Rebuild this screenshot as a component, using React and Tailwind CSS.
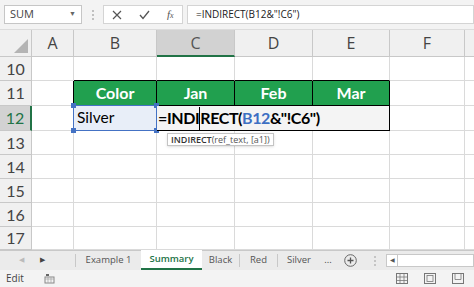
import React from "react";

const RowHead = ({ n, active }) => (
  <div
    className={
      active
        ? "w-[32px] shrink-0 flex items-center justify-center bg-[#d2d2d2] border-r-2 border-r-[#217346] border-b border-b-[#c8c8c8] text-[#217346] text-[16px]"
        : "w-[32px] shrink-0 flex items-center justify-center bg-[#f0f0f0] border-r border-b border-[#c8c8c8] text-[#444] text-[16px]"
    }
  >
    {n}
  </div>
);

const Blank = ({ w, extra = "" }) => (
  <div className={`shrink-0 border-r border-b border-[#dadada] ${w} ${extra}`} />
);

const GreenCell = ({ w, children }) => (
  <div
    className={`shrink-0 flex items-center justify-center bg-[#21a04f] text-white font-bold text-[16px] border-r border-b border-black ${w}`}
  >
    {children}
  </div>
);

const Handle = ({ pos }) => (
  <span className={`absolute w-[5px] h-[5px] bg-[#4472c4] ${pos}`} />
);

export default function App() {
  return (
    <div className="w-[474px] h-[287px] overflow-hidden bg-white font-['Lato','Liberation_Sans',sans-serif] flex flex-col">
      {/* formula bar */}
      <div className="h-[30px] shrink-0 bg-[#f3f3f3] flex items-center pl-[4px] border-b border-[#dcdcdc]">
        <div className="w-[78px] h-[19px] bg-white border border-[#c6c6c6] flex items-center justify-between px-[5px] font-['Open_Sans',sans-serif] text-[11px] text-[#444]">
          <span>SUM</span>
          <span className="text-[7px] text-[#666]">▼</span>
        </div>
        <div className="w-[21px] flex flex-col items-center gap-[2px]">
          <span className="w-[2px] h-[2px] bg-[#c0c0c0]" />
          <span className="w-[2px] h-[2px] bg-[#c0c0c0]" />
          <span className="w-[2px] h-[2px] bg-[#c0c0c0]" />
        </div>
        <div className="w-[80px] h-[19px] bg-white border border-[#d4d4d4] flex items-center justify-around text-[#555]">
          <svg width="10" height="10" viewBox="0 0 10 10">
            <path d="M1 1L9 9M9 1L1 9" stroke="#555" strokeWidth="1.2" />
          </svg>
          <svg width="11" height="10" viewBox="0 0 11 10">
            <path d="M1 5L4 8.5L10 1" stroke="#555" strokeWidth="1.3" fill="none" />
          </svg>
          <span className="font-['Liberation_Serif',serif] italic text-[11px]">
            f<span className="text-[8px]">x</span>
          </span>
        </div>
        <div className="ml-[4px] flex-1 h-[19px] bg-white border border-[#d4d4d4] flex items-center pl-[8px] font-['Open_Sans',sans-serif] text-[10px] text-[#222]">
          =INDIRECT(B12&amp;"!C6")
        </div>
      </div>

      {/* column headers */}
      <div className="h-[27px] shrink-0 flex bg-[#f0f0f0] font-['Open_Sans',sans-serif] text-[16px] text-[#444]">
        <div className="w-[32px] shrink-0 border-r border-b border-[#c8c8c8] relative">
          <svg className="absolute right-[3px] bottom-[3px]" width="14" height="14" viewBox="0 0 14 14">
            <path d="M14 0L14 14L0 14Z" fill="#b4b4b4" />
          </svg>
        </div>
        <div className="w-[42px] shrink-0 flex items-center justify-center border-r border-b border-[#c8c8c8]">A</div>
        <div className="w-[83px] shrink-0 flex items-center justify-center border-r border-b border-[#c8c8c8]">B</div>
        <div className="w-[78px] shrink-0 flex items-center justify-center bg-[#d2d2d2] text-[#555] border-r border-[#c8c8c8] border-b-2 border-b-[#217346]">C</div>
        <div className="w-[78px] shrink-0 flex items-center justify-center border-r border-b border-[#c8c8c8]">D</div>
        <div className="w-[77px] shrink-0 flex items-center justify-center border-r border-b border-[#c8c8c8]">E</div>
        <div className="w-[75px] shrink-0 flex items-center justify-center border-r border-b border-[#c8c8c8]">F</div>
        <div className="flex-1 border-b border-[#c8c8c8]" />
      </div>

      {/* row 10 */}
      <div className="h-[24px] shrink-0 flex">
        <RowHead n="10" />
        <Blank w="w-[42px]" />
        <Blank w="w-[83px]" extra="!border-b-black" />
        <Blank w="w-[78px]" extra="!border-b-black" />
        <Blank w="w-[78px]" extra="!border-b-black" />
        <Blank w="w-[77px]" extra="!border-b-black" />
        <Blank w="w-[75px]" />
        <div className="flex-1 border-b border-[#dadada]" />
      </div>

      {/* row 11 */}
      <div className="h-[25px] shrink-0 flex">
        <RowHead n="11" />
        <Blank w="w-[42px]" extra="!border-r-black" />
        <GreenCell w="w-[83px]">Color</GreenCell>
        <GreenCell w="w-[78px]">Jan</GreenCell>
        <GreenCell w="w-[78px]">Feb</GreenCell>
        <GreenCell w="w-[77px]">Mar</GreenCell>
        <Blank w="w-[75px]" />
        <div className="flex-1 border-b border-[#dadada]" />
      </div>

      {/* row 12 */}
      <div className="h-[25px] shrink-0 flex relative z-10">
        <RowHead n="12" active />
        <Blank w="w-[42px]" extra="!border-r-black" />
        <div className="w-[83px] shrink-0 relative bg-[#e8eef8] flex items-center pl-[3px] text-[15.5px] text-black border-r border-b border-black">
          Silver
          <span className="absolute -left-[1px] -top-[1px] -right-[1px] -bottom-[1px] border-[1.5px] border-[#4472c4]" />
          <Handle pos="-left-[3px] -top-[3px]" />
          <Handle pos="-right-[3px] -top-[3px]" />
          <Handle pos="-left-[3px] -bottom-[3px]" />
          <Handle pos="-right-[3px] -bottom-[3px]" />
        </div>
        <div className="w-[233px] shrink-0 relative bg-[#f4f4f4] flex items-center pl-[1px] text-[16px] tracking-[-0.4px] font-bold text-black border-r border-b border-black whitespace-nowrap">
          <span>=INDI</span>
          <span className="inline-block w-px h-[23px] bg-black" />
          <span>RECT(</span>
          <span className="text-[#3d6fc3]">B12</span>
          <span>&amp;"!C6")</span>
        </div>
        <Blank w="w-[75px]" />
        <div className="flex-1 border-b border-[#dadada]" />
      </div>

      {/* rows 13-17 */}
      {["13", "14", "15", "16", "17"].map((n, i) => (
        <div key={n} className={i === 4 ? "h-[23px] shrink-0 flex relative" : "h-[24px] shrink-0 flex relative"}>
          <RowHead n={n} />
          <Blank w="w-[42px]" />
          <Blank w="w-[83px]" />
          <Blank w="w-[78px]" />
          <Blank w="w-[78px]" />
          <Blank w="w-[77px]" />
          <Blank w="w-[75px]" />
          <div className="flex-1 border-b border-[#dadada]" />
          {i === 0 && (
            <div className="absolute left-[167px] top-[2px] h-[13px] px-[3px] bg-white border border-[#c4c4c4] shadow-sm flex items-center font-['Open_Sans',sans-serif] text-[9px] text-[#555] whitespace-nowrap">
              <span className="text-[#333] font-semibold">INDIRECT</span>(ref_text, [a1])
            </div>
          )}
        </div>
      ))}

      {/* sheet tabs */}
      <div className="h-[20px] shrink-0 flex items-stretch bg-[#ebebeb] border-t border-[#c8c8c8] font-['Open_Sans',sans-serif] text-[9.5px] text-[#555]">
        <div className="w-[76px] flex items-center pl-[19px] gap-[16px] border-r border-[#c8c8c8] my-[3px]">
          <span className="text-[7px] text-[#bbb]">◀</span>
          <span className="text-[7px] text-[#444]">▶</span>
        </div>
        <div className="w-[65px] flex items-center justify-center">Example 1</div>
        <div className="w-[61px] flex items-center justify-center bg-white -mt-px border-b-2 border-[#217346] text-[#217346] font-semibold">Summary</div>
        <div className="w-[38px] flex items-center justify-center border-r border-[#c8c8c8] my-[3px]">Black</div>
        <div className="w-[38px] flex items-center justify-center border-r border-[#c8c8c8] my-[3px]">Red</div>
        <div className="w-[42px] flex items-center justify-center">Silver</div>
        <div className="w-[16px] flex items-center justify-center text-[#444]">...</div>
        <div className="w-[28px] flex items-center justify-center">
          <svg width="13" height="13" viewBox="0 0 13 13">
            <circle cx="6.5" cy="6.5" r="5.8" stroke="#666" strokeWidth="1" fill="none" />
            <path d="M6.5 3.5V9.5M3.5 6.5H9.5" stroke="#555" strokeWidth="1.3" />
          </svg>
        </div>
        <div className="w-[22px] flex flex-col items-center justify-center gap-[2px]">
          <span className="w-[2px] h-[2px] bg-[#c4c4c4]" />
          <span className="w-[2px] h-[2px] bg-[#c4c4c4]" />
          <span className="w-[2px] h-[2px] bg-[#c4c4c4]" />
        </div>
        <div className="flex-1 my-[3px] bg-white border border-[#c8c8c8] flex items-center">
          <span className="w-[11px] h-full flex items-center justify-center border-r border-[#c8c8c8] text-[6px] text-[#555]">◀</span>
        </div>
      </div>

      {/* status bar */}
      <div className="flex-1 bg-[#f3f3f3] flex items-center font-['Open_Sans',sans-serif] text-[10px] text-[#444]">
        <span className="ml-[6px]">Edit</span>
        <svg className="ml-[20px]" width="11" height="10" viewBox="0 0 11 10">
          <rect x="1" y="3" width="9" height="6" fill="none" stroke="#888" strokeWidth="1" />
          <path d="M1 5H10M4 3V9M7 3V9" stroke="#aaa" strokeWidth="0.8" />
          <rect x="2" y="0" width="3" height="2" fill="#666" />
        </svg>
        <div className="ml-auto mr-[10px] flex items-center gap-[16px]">
          <svg width="12" height="11" viewBox="0 0 12 11">
            <rect x="0.5" y="0.5" width="11" height="10" fill="none" stroke="#777" />
            <path d="M0.5 4H11.5M0.5 7.5H11.5M4 0.5V10.5M8 0.5V10.5" stroke="#777" strokeWidth="0.8" />
          </svg>
          <svg width="12" height="11" viewBox="0 0 12 11">
            <rect x="0.5" y="0.5" width="11" height="10" fill="none" stroke="#777" />
            <rect x="3" y="2.5" width="6" height="6" fill="none" stroke="#777" strokeWidth="0.8" />
          </svg>
          <svg width="12" height="11" viewBox="0 0 12 11">
            <rect x="0.5" y="0.5" width="11" height="10" fill="none" stroke="#777" />
            <path d="M3 0.5V6.5H9V0.5" fill="none" stroke="#777" strokeWidth="0.8" />
          </svg>
        </div>
      </div>
    </div>
  );
}
